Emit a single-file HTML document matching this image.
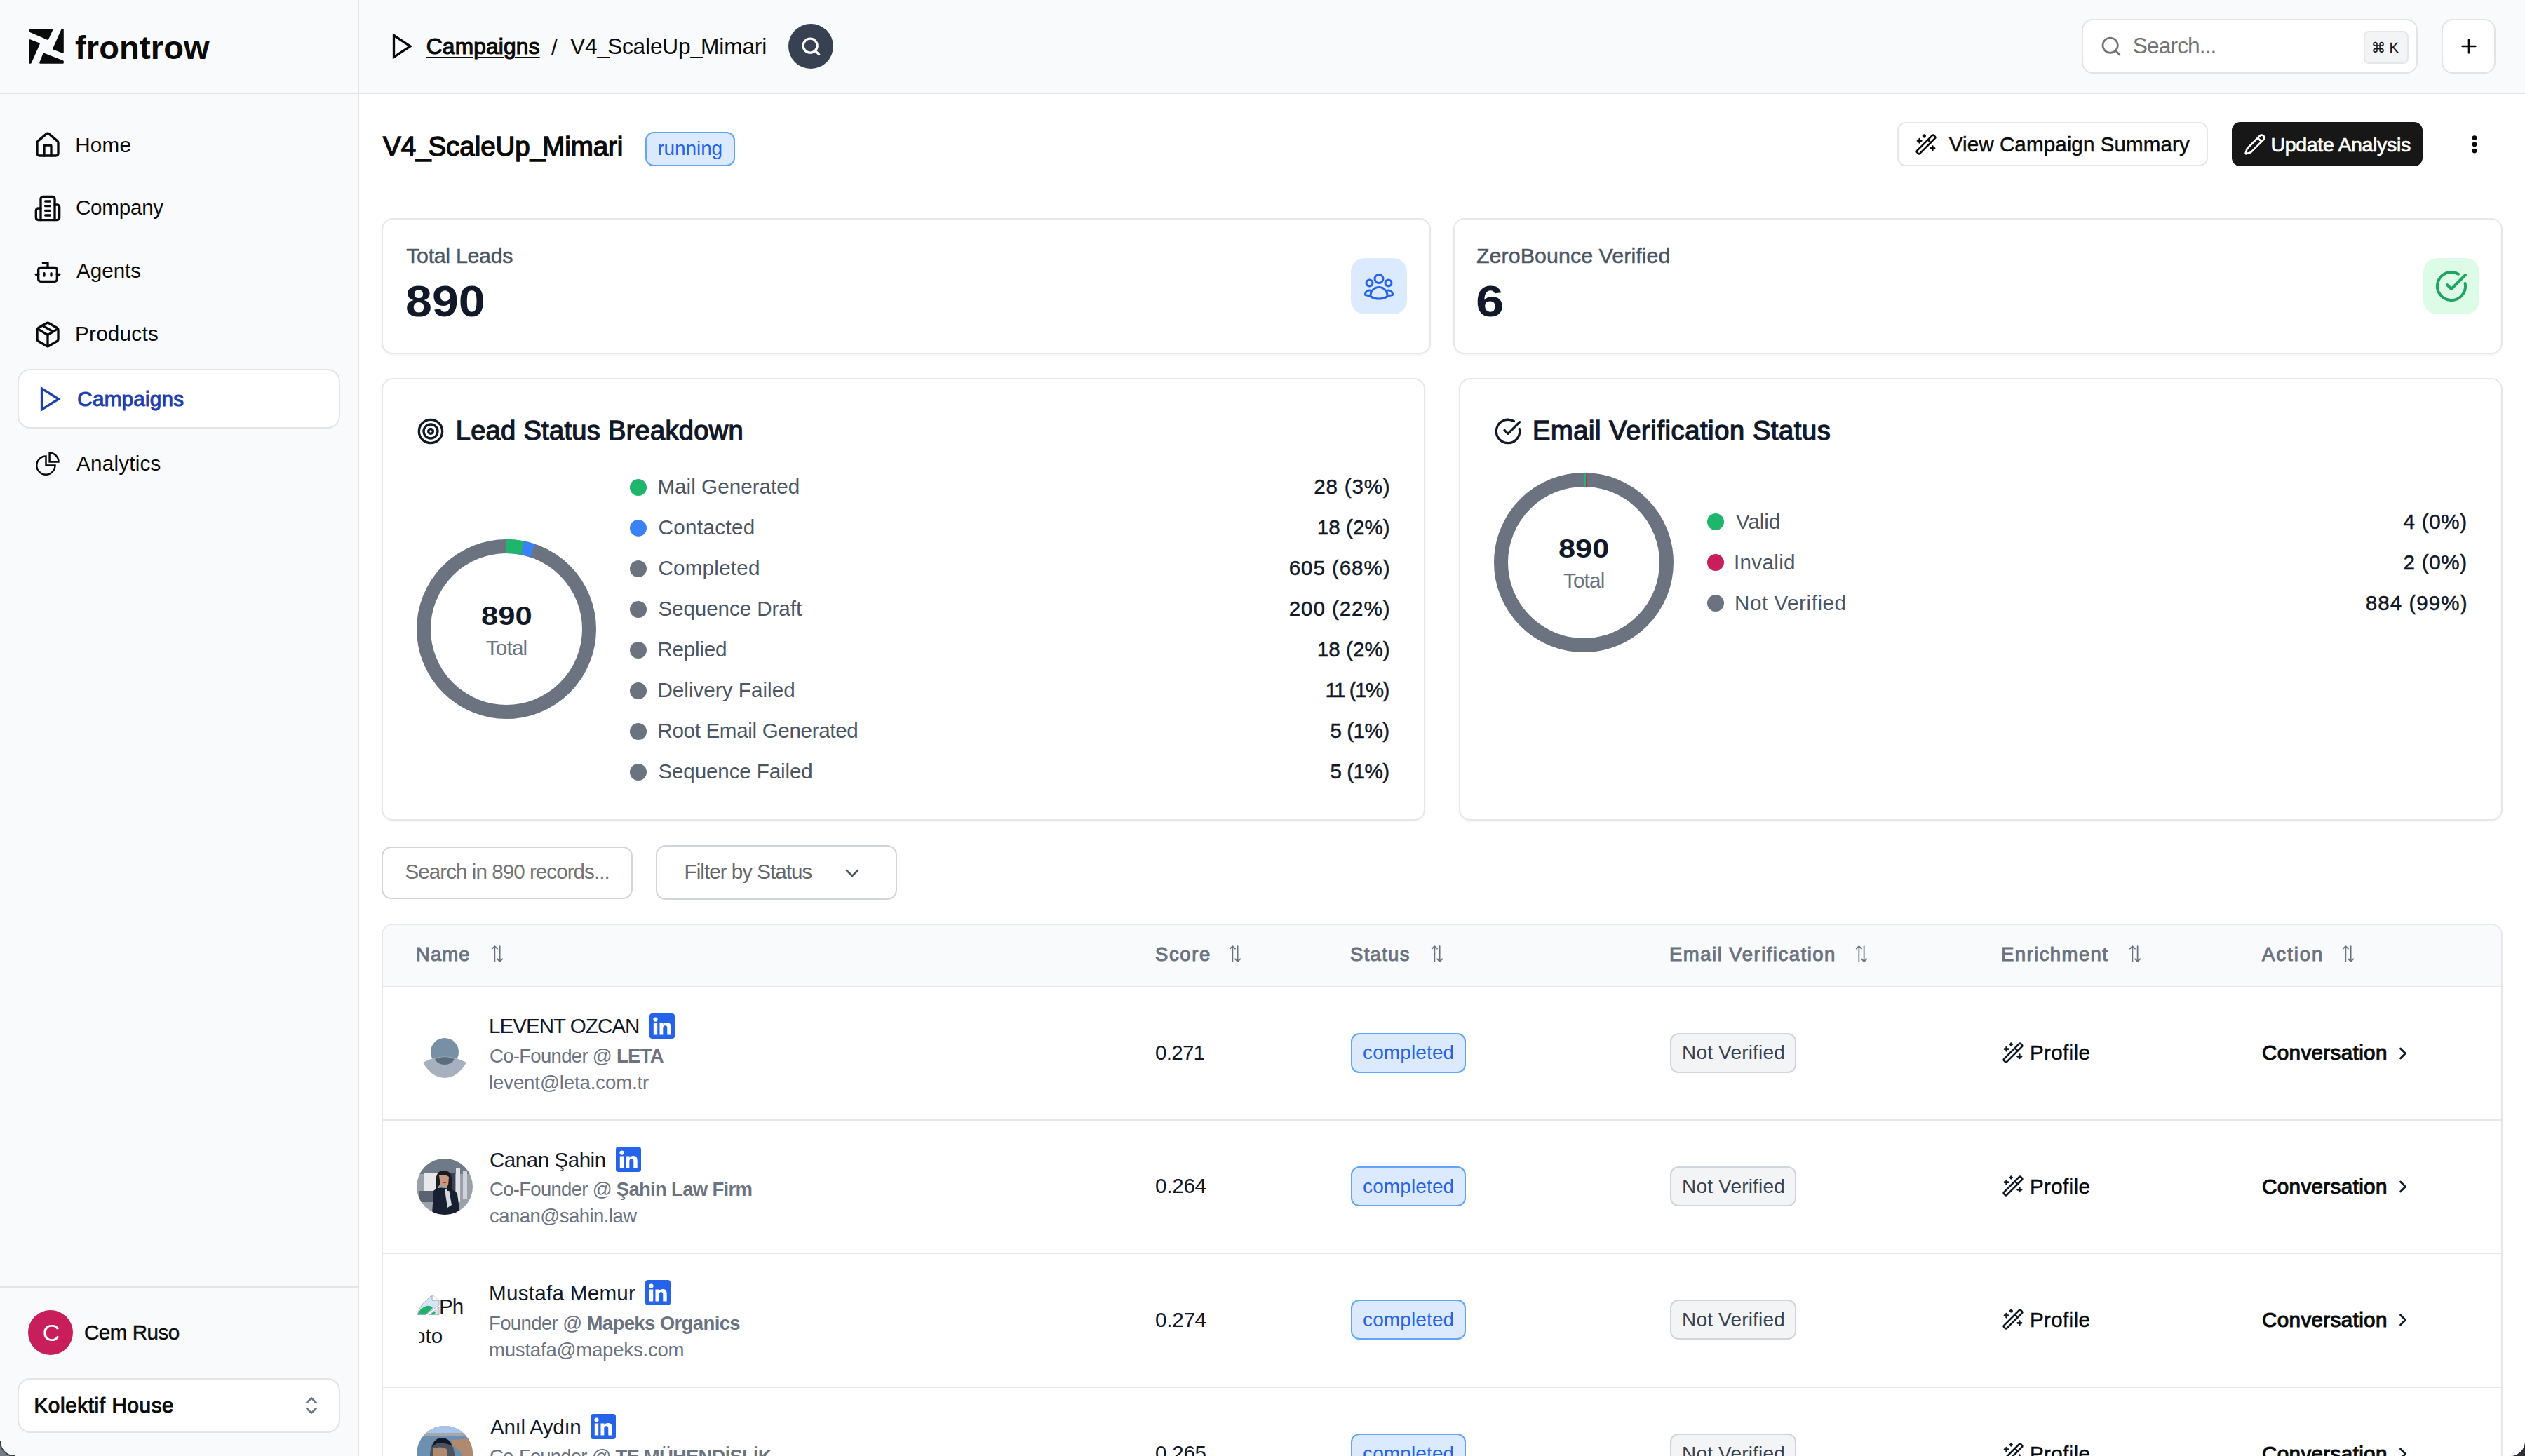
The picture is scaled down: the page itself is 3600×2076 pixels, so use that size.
<!DOCTYPE html>
<html><head><meta charset="utf-8"><title>Campaign</title>
<style>
*{box-sizing:border-box;margin:0;padding:0}
html,body{width:3600px;height:2076px;overflow:hidden;background:#fff}
body{font-family:"Liberation Sans",sans-serif;color:#111827;position:relative}
.abs{position:absolute}
svg{display:block}
.tx{position:absolute;white-space:nowrap;line-height:normal}
.card{position:absolute;background:#fff;border:2px solid #e5e7eb;border-radius:16px;box-shadow:0 2px 3px rgba(0,0,0,.04)}
.dot{position:absolute;width:24px;height:24px;border-radius:50%}
@media (max-width:2400px){html{zoom:0.5}}
</style></head><body>
<div class="abs" style="left:0;top:0;width:512px;height:2076px;background:#f9fafb;border-right:2px solid #e4e4e4"></div>
<div class="abs" style="left:512px;top:0;width:3088px;height:134px;background:#f9fafb;border-bottom:2px solid #e4e4e4"></div>
<div class="abs" style="left:0;top:132px;width:510px;height:2px;background:#e4e4e4"></div>
<svg class="abs" style="left:40px;top:40px" width="52" height="52" viewBox="0 0 52 52" fill="#0a0a0a" stroke="#0a0a0a" stroke-width="2.6" stroke-linejoin="round">
<path d="M2.5 2.5 L34 2.5 L28 15.5 L2.5 4.5 Z"/><path d="M49.5 2.5 L49.5 34.5 L36.5 29.5 L48.5 2.5 Z"/>
<path d="M49.5 49.5 L17.5 49.5 L22.5 37 L49.5 47.5 Z"/><path d="M2.5 49.5 L2.5 17.5 L15.5 22.5 L3.5 49.5 Z"/></svg>
<svg class="abs" style="left:48px;top:187px" width="40" height="40" viewBox="0 0 24 24" fill="none" stroke-linecap="round" stroke-linejoin="round" stroke="#0a0a0a" stroke-width="2" ><path d="M15 21v-8a1 1 0 0 0-1-1h-4a1 1 0 0 0-1 1v8"/><path d="M3 10a2 2 0 0 1 .709-1.528l7-5.999a2 2 0 0 1 2.582 0l7 5.999A2 2 0 0 1 21 10v9a2 2 0 0 1-2 2H5a2 2 0 0 1-2-2z"/></svg>
<svg class="abs" style="left:48px;top:277px" width="40" height="40" viewBox="0 0 24 24" fill="none" stroke-linecap="round" stroke-linejoin="round" stroke="#0a0a0a" stroke-width="2" ><path d="M6 22V4a2 2 0 0 1 2-2h8a2 2 0 0 1 2 2v18Z"/><path d="M6 12H4a2 2 0 0 0-2 2v6a2 2 0 0 0 2 2h2"/><path d="M18 9h2a2 2 0 0 1 2 2v9a2 2 0 0 1-2 2h-2"/><path d="M10 6h4"/><path d="M10 10h4"/><path d="M10 14h4"/><path d="M10 18h4"/></svg>
<svg class="abs" style="left:48px;top:368px" width="40" height="40" viewBox="0 0 24 24" fill="none" stroke-linecap="round" stroke-linejoin="round" stroke="#0a0a0a" stroke-width="2" ><path d="M12 8V4H8"/><rect width="16" height="12" x="4" y="8" rx="2"/><path d="M2 14h2"/><path d="M20 14h2"/><path d="M15 13v2"/><path d="M9 13v2"/></svg>
<svg class="abs" style="left:48px;top:457px" width="40" height="40" viewBox="0 0 24 24" fill="none" stroke-linecap="round" stroke-linejoin="round" stroke="#0a0a0a" stroke-width="2" ><path d="M11 21.73a2 2 0 0 0 2 0l7-4A2 2 0 0 0 21 16V8a2 2 0 0 0-1-1.73l-7-4a2 2 0 0 0-2 0l-7 4A2 2 0 0 0 3 8v8a2 2 0 0 0 1 1.73z"/><path d="M12 22V12"/><path d="m3.3 7 7.703 4.734a2 2 0 0 0 1.994 0L20.7 7"/><path d="m7.5 4.27 9 5.15"/></svg>
<div class="abs" style="left:25px;top:526px;width:460px;height:85px;background:#fff;border:2px solid #e4e4e4;border-radius:18px"></div>
<svg class="abs" style="left:56px;top:551px" width="32" height="36" viewBox="0 0 32 36" fill="none" stroke="#1e40af" stroke-width="3.3" stroke-linejoin="miter"><path d="M3.5 3 L27.5 18 L3.5 33 Z"/></svg>
<svg class="abs" style="left:45px;top:638px" width="50" height="46" viewBox="0 0 50 46" fill="none" stroke="#0a0a0a" stroke-width="2.5" stroke-linejoin="miter"><path d="M20.5 12.5 V25.6 H33.5 A13.1 13.1 0 1 1 20.5 12.5 Z"/><path d="M25.6 20.5 V7.7 A12.8 12.8 0 0 1 38.4 20.5 Z"/></svg>
<div class="abs" style="left:0;top:1834px;width:510px;height:2px;background:#e4e4e4"></div>
<div class="abs" style="left:40px;top:1868px;width:64px;height:64px;border-radius:50%;background:#c81e5a"></div>
<div class="abs" style="left:25px;top:1965px;width:460px;height:78px;background:#fff;border:2px solid #e4e4e4;border-radius:18px"></div>
<svg class="abs" style="left:428px;top:1988px" width="32" height="32" viewBox="0 0 24 24" fill="none" stroke="#6b7280" stroke-width="2" stroke-linecap="round" stroke-linejoin="round"><path d="m7 15 5 5 5-5"/><path d="m7 9 5-5 5 5"/></svg>
<svg class="abs" style="left:558px;top:47px" width="32" height="38" viewBox="0 0 32 38" fill="none" stroke="#0a0a0a" stroke-width="3.3" stroke-linejoin="miter"><path d="M3.5 3.5 L27 19 L3.5 34.5 Z"/></svg>
<div class="abs" style="left:1124px;top:34px;width:64px;height:64px;border-radius:50%;background:#374151"></div>
<svg class="abs" style="left:1136px;top:46px" width="40" height="40" viewBox="0 0 24 24" fill="none" stroke="#fff" stroke-width="2" stroke-linecap="round" stroke-linejoin="round"><circle cx="11.5" cy="11.5" r="6"/><path d="m19 19-3.2-3.2"/></svg>
<div class="abs" style="left:2968px;top:27px;width:479px;height:78px;background:#fff;border:2px solid #e4e4e4;border-radius:16px"></div>
<svg class="abs" style="left:2994px;top:50px" width="32" height="32" viewBox="0 0 24 24" fill="none" stroke-linecap="round" stroke-linejoin="round" stroke="#737373" stroke-width="2" ><circle cx="11" cy="11" r="8"/><path d="m21 21-4.3-4.3"/></svg>
<div class="abs" style="left:3370px;top:44px;width:64px;height:47px;background:#f3f4f6;border:2px solid #e5e7eb;border-radius:8px"></div>
<div class="abs" style="left:3481px;top:27px;width:77px;height:78px;background:#fff;border:2px solid #e4e4e4;border-radius:16px"></div>
<svg class="abs" style="left:3504px;top:50px" width="32" height="32" viewBox="0 0 24 24" fill="none" stroke-linecap="round" stroke-linejoin="round" stroke="#0a0a0a" stroke-width="2" ><path d="M5 12h14"/><path d="M12 5v14"/></svg>
<div class="abs" style="left:920px;top:188px;width:128px;height:49px;background:#dbeafe;border:2px solid #60a5fa;border-radius:12px"></div>
<div class="abs" style="left:2705px;top:174px;width:443px;height:63px;background:#fff;border:2px solid #e5e7eb;border-radius:12px"></div>
<svg class="abs" style="left:2730px;top:190px" width="32" height="32" viewBox="0 0 24 24" fill="none" stroke-linecap="round" stroke-linejoin="round" stroke="#0a0a0a" stroke-width="2" ><path d="m21.64 3.64-1.28-1.28a1.21 1.21 0 0 0-1.72 0L2.36 18.64a1.21 1.21 0 0 0 0 1.72l1.28 1.28a1.2 1.2 0 0 0 1.72 0L21.64 5.36a1.2 1.2 0 0 0 0-1.72"/><path d="m14 7 3 3"/><path d="M5 6v4"/><path d="M19 14v4"/><path d="M10 2v2"/><path d="M7 8H3"/><path d="M21 16h-4"/><path d="M11 3H9"/></svg>
<div class="abs" style="left:3182px;top:174px;width:272px;height:63px;background:#171717;border-radius:12px"></div>
<svg class="abs" style="left:3199px;top:190px" width="32" height="32" viewBox="0 0 24 24" fill="none" stroke-linecap="round" stroke-linejoin="round" stroke="#fff" stroke-width="2" ><path d="M21.174 6.812a1 1 0 0 0-3.986-3.987L3.842 16.174a2 2 0 0 0-.5.83l-1.321 4.352a.5.5 0 0 0 .623.622l4.353-1.32a2 2 0 0 0 .83-.497z"/><path d="m15 5 4 4"/></svg>
<svg class="abs" style="left:3508px;top:186px" width="40" height="40" viewBox="0 0 40 40" fill="#0a0a0a"><circle cx="20" cy="10.6" r="3.4"/><circle cx="20" cy="19.8" r="3.4"/><circle cx="20" cy="29.1" r="3.4"/></svg>
<div class="card" style="left:544px;top:311px;width:1496px;height:194px"></div>
<div class="card" style="left:2072px;top:311px;width:1496px;height:194px"></div>
<div class="abs" style="left:1926px;top:368px;width:80px;height:80px;background:#dbeafe;border-radius:20px"></div>
<svg class="abs" style="left:1942px;top:384px" width="48" height="48" viewBox="0 0 24 24" fill="none" stroke-linecap="round" stroke-linejoin="round" stroke="#2563eb" stroke-width="1.5" ><path d="M18 18.72a9.094 9.094 0 0 0 3.741-.479 3 3 0 0 0-4.682-2.72m.94 3.198.001.031c0 .225-.012.447-.037.666A11.944 11.944 0 0 1 12 21c-2.17 0-4.207-.576-5.963-1.584A6.062 6.062 0 0 1 6 18.719m12 0a5.971 5.971 0 0 0-.941-3.197m0 0A5.995 5.995 0 0 0 12 12.75a5.995 5.995 0 0 0-5.058 2.772m0 0a3 3 0 0 0-4.681 2.72 8.986 8.986 0 0 0 3.74.477m.94-3.197a5.971 5.971 0 0 0-.94 3.197M15 6.75a3 3 0 1 1-6 0 3 3 0 0 1 6 0Zm6 3a2.25 2.25 0 1 1-4.5 0 2.25 2.25 0 0 1 4.5 0Zm-13.5 0a2.25 2.25 0 1 1-4.5 0 2.25 2.25 0 0 1 4.5 0Z"/></svg>
<div class="abs" style="left:3455px;top:368px;width:80px;height:80px;background:#dcfce7;border-radius:20px"></div>
<svg class="abs" style="left:3471px;top:384px" width="48" height="48" viewBox="0 0 24 24" fill="none" stroke-linecap="round" stroke-linejoin="round" stroke="#1fa463" stroke-width="2" ><path d="M21.801 10A10 10 0 1 1 17 3.335"/><path d="m9 11 3 3L22 4"/></svg>
<div class="card" style="left:544px;top:539px;width:1488px;height:631px"></div>
<div class="card" style="left:2080px;top:539px;width:1488px;height:631px"></div>
<svg class="abs" style="left:594px;top:595px" width="40" height="40" viewBox="0 0 24 24" fill="none" stroke-linecap="round" stroke-linejoin="round" stroke="#111827" stroke-width="2" ><circle cx="12" cy="12" r="10"/><circle cx="12" cy="12" r="6"/><circle cx="12" cy="12" r="2"/></svg>
<svg class="abs" style="left:2130px;top:595px" width="40" height="40" viewBox="0 0 24 24" fill="none" stroke-linecap="round" stroke-linejoin="round" stroke="#111827" stroke-width="2" ><path d="M21.801 10A10 10 0 1 1 17 3.335"/><path d="m9 11 3 3L22 4"/></svg>
<svg class="abs" style="left:594px;top:769px" width="256" height="256" viewBox="0 0 256 256"><circle cx="128" cy="128" r="118" fill="none" stroke="#6b7280" stroke-width="20"/><circle cx="128" cy="128" r="118" fill="none" stroke="#1eb56d" stroke-width="20" stroke-dasharray="0 0.00 23.33 2000" transform="rotate(-90 128 128)"/><circle cx="128" cy="128" r="118" fill="none" stroke="#3b82f6" stroke-width="20" stroke-dasharray="0 23.33 14.99 2000" transform="rotate(-90 128 128)"/></svg>
<svg class="abs" style="left:2130px;top:674px" width="256" height="256" viewBox="0 0 256 256"><circle cx="128" cy="128" r="118" fill="none" stroke="#6b7280" stroke-width="20"/><circle cx="128" cy="128" r="118" fill="none" stroke="#1eb56d" stroke-width="20" stroke-dasharray="0 0.00 3.33 2000" transform="rotate(-90 128 128)"/><circle cx="128" cy="128" r="118" fill="none" stroke="#c81e5a" stroke-width="20" stroke-dasharray="0 3.33 1.67 2000" transform="rotate(-90 128 128)"/></svg>
<div class="dot" style="left:898px;top:683px;background:#1eb56d"></div>
<div class="dot" style="left:898px;top:741px;background:#3b82f6"></div>
<div class="dot" style="left:898px;top:799px;background:#6b7280"></div>
<div class="dot" style="left:898px;top:857px;background:#6b7280"></div>
<div class="dot" style="left:898px;top:915px;background:#6b7280"></div>
<div class="dot" style="left:898px;top:973px;background:#6b7280"></div>
<div class="dot" style="left:898px;top:1031px;background:#6b7280"></div>
<div class="dot" style="left:898px;top:1089px;background:#6b7280"></div>
<div class="dot" style="left:2434px;top:732px;background:#1eb56d"></div>
<div class="dot" style="left:2434px;top:790px;background:#c81e5a"></div>
<div class="dot" style="left:2434px;top:848px;background:#6b7280"></div>
<div class="abs" style="left:544px;top:1207px;width:358px;height:75px;background:#fff;border:2px solid #d1d5db;border-radius:14px"></div>
<div class="abs" style="left:935px;top:1205px;width:344px;height:78px;background:#fff;border:2px solid #d1d5db;border-radius:14px"></div>
<svg class="abs" style="left:1199px;top:1229px" width="32" height="32" viewBox="0 0 24 24" fill="none" stroke-linecap="round" stroke-linejoin="round" stroke="#4b5563" stroke-width="2" ><path d="m6 9 6 6 6-6"/></svg>
<div class="abs" style="left:544px;top:1317px;width:3024px;height:900px;background:#fff;border:2px solid #e5e7eb;border-radius:16px;overflow:hidden"><div style="height:89px;background:#f9fafb;border-bottom:2px solid #e5e7eb"></div></div>
<svg class="abs" style="left:700px;top:1347px" width="18" height="26" viewBox="0 0 17 25" fill="none" stroke="#6b7280" stroke-width="1.7" stroke-linecap="round" stroke-linejoin="round"><path d="M5 23V2M1.5 5.5 5 2l3.5 3.5"/><path d="M12 2v21M8.5 19.5 12 23l3.5-3.5"/></svg>
<svg class="abs" style="left:1752px;top:1347px" width="18" height="26" viewBox="0 0 17 25" fill="none" stroke="#6b7280" stroke-width="1.7" stroke-linecap="round" stroke-linejoin="round"><path d="M5 23V2M1.5 5.5 5 2l3.5 3.5"/><path d="M12 2v21M8.5 19.5 12 23l3.5-3.5"/></svg>
<svg class="abs" style="left:2040px;top:1347px" width="18" height="26" viewBox="0 0 17 25" fill="none" stroke="#6b7280" stroke-width="1.7" stroke-linecap="round" stroke-linejoin="round"><path d="M5 23V2M1.5 5.5 5 2l3.5 3.5"/><path d="M12 2v21M8.5 19.5 12 23l3.5-3.5"/></svg>
<svg class="abs" style="left:2645px;top:1347px" width="18" height="26" viewBox="0 0 17 25" fill="none" stroke="#6b7280" stroke-width="1.7" stroke-linecap="round" stroke-linejoin="round"><path d="M5 23V2M1.5 5.5 5 2l3.5 3.5"/><path d="M12 2v21M8.5 19.5 12 23l3.5-3.5"/></svg>
<svg class="abs" style="left:3035px;top:1347px" width="18" height="26" viewBox="0 0 17 25" fill="none" stroke="#6b7280" stroke-width="1.7" stroke-linecap="round" stroke-linejoin="round"><path d="M5 23V2M1.5 5.5 5 2l3.5 3.5"/><path d="M12 2v21M8.5 19.5 12 23l3.5-3.5"/></svg>
<svg class="abs" style="left:3339px;top:1347px" width="18" height="26" viewBox="0 0 17 25" fill="none" stroke="#6b7280" stroke-width="1.7" stroke-linecap="round" stroke-linejoin="round"><path d="M5 23V2M1.5 5.5 5 2l3.5 3.5"/><path d="M12 2v21M8.5 19.5 12 23l3.5-3.5"/></svg>
<div class="abs" style="left:546px;top:1596px;width:3020px;height:2px;background:#e5e7eb"></div>
<svg class="abs" style="left:926px;top:1445px" width="36" height="36" viewBox="0 0 36 36"><rect width="36" height="36" rx="4" fill="#2563eb"/><circle cx="8.5" cy="8.6" r="3.1" fill="#fff"/><rect x="5.8" y="13.5" width="5.4" height="17" fill="#fff"/><path d="M14.5 13.5h5.1v2.4c.8-1.5 2.6-2.8 5.2-2.8 5 0 5.9 3.2 5.9 7.5v9.9h-5.4v-8.7c0-2.1 0-4.6-2.8-4.6s-3.2 2.2-3.2 4.5v8.8h-4.8z" fill="#fff"/></svg>
<div class="abs" style="left:1926px;top:1473px;width:164px;height:57px;background:#dbeafe;border:2px solid #60a5fa;border-radius:12px"></div>
<div class="abs" style="left:2381px;top:1473px;width:180px;height:57px;background:#f3f4f6;border:2px solid #d1d5db;border-radius:12px"></div>
<svg class="abs" style="left:2854px;top:1485px" width="32" height="32" viewBox="0 0 24 24" fill="none" stroke-linecap="round" stroke-linejoin="round" stroke="#111827" stroke-width="2" ><path d="m21.64 3.64-1.28-1.28a1.21 1.21 0 0 0-1.72 0L2.36 18.64a1.21 1.21 0 0 0 0 1.72l1.28 1.28a1.2 1.2 0 0 0 1.72 0L21.64 5.36a1.2 1.2 0 0 0 0-1.72"/><path d="m14 7 3 3"/><path d="M5 6v4"/><path d="M19 14v4"/><path d="M10 2v2"/><path d="M7 8H3"/><path d="M21 16h-4"/><path d="M11 3H9"/></svg>
<svg class="abs" style="left:3412px;top:1488px" width="28" height="28" viewBox="0 0 24 24" fill="none" stroke-linecap="round" stroke-linejoin="round" stroke="#111827" stroke-width="2.4" ><path d="m9 18 6-6-6-6"/></svg>
<div class="abs" style="left:546px;top:1786px;width:3020px;height:2px;background:#e5e7eb"></div>
<svg class="abs" style="left:878px;top:1635px" width="36" height="36" viewBox="0 0 36 36"><rect width="36" height="36" rx="4" fill="#2563eb"/><circle cx="8.5" cy="8.6" r="3.1" fill="#fff"/><rect x="5.8" y="13.5" width="5.4" height="17" fill="#fff"/><path d="M14.5 13.5h5.1v2.4c.8-1.5 2.6-2.8 5.2-2.8 5 0 5.9 3.2 5.9 7.5v9.9h-5.4v-8.7c0-2.1 0-4.6-2.8-4.6s-3.2 2.2-3.2 4.5v8.8h-4.8z" fill="#fff"/></svg>
<div class="abs" style="left:1926px;top:1663px;width:164px;height:57px;background:#dbeafe;border:2px solid #60a5fa;border-radius:12px"></div>
<div class="abs" style="left:2381px;top:1663px;width:180px;height:57px;background:#f3f4f6;border:2px solid #d1d5db;border-radius:12px"></div>
<svg class="abs" style="left:2854px;top:1675px" width="32" height="32" viewBox="0 0 24 24" fill="none" stroke-linecap="round" stroke-linejoin="round" stroke="#111827" stroke-width="2" ><path d="m21.64 3.64-1.28-1.28a1.21 1.21 0 0 0-1.72 0L2.36 18.64a1.21 1.21 0 0 0 0 1.72l1.28 1.28a1.2 1.2 0 0 0 1.72 0L21.64 5.36a1.2 1.2 0 0 0 0-1.72"/><path d="m14 7 3 3"/><path d="M5 6v4"/><path d="M19 14v4"/><path d="M10 2v2"/><path d="M7 8H3"/><path d="M21 16h-4"/><path d="M11 3H9"/></svg>
<svg class="abs" style="left:3412px;top:1678px" width="28" height="28" viewBox="0 0 24 24" fill="none" stroke-linecap="round" stroke-linejoin="round" stroke="#111827" stroke-width="2.4" ><path d="m9 18 6-6-6-6"/></svg>
<div class="abs" style="left:546px;top:1977px;width:3020px;height:2px;background:#e5e7eb"></div>
<svg class="abs" style="left:920px;top:1825px" width="36" height="36" viewBox="0 0 36 36"><rect width="36" height="36" rx="4" fill="#2563eb"/><circle cx="8.5" cy="8.6" r="3.1" fill="#fff"/><rect x="5.8" y="13.5" width="5.4" height="17" fill="#fff"/><path d="M14.5 13.5h5.1v2.4c.8-1.5 2.6-2.8 5.2-2.8 5 0 5.9 3.2 5.9 7.5v9.9h-5.4v-8.7c0-2.1 0-4.6-2.8-4.6s-3.2 2.2-3.2 4.5v8.8h-4.8z" fill="#fff"/></svg>
<div class="abs" style="left:1926px;top:1853px;width:164px;height:57px;background:#dbeafe;border:2px solid #60a5fa;border-radius:12px"></div>
<div class="abs" style="left:2381px;top:1853px;width:180px;height:57px;background:#f3f4f6;border:2px solid #d1d5db;border-radius:12px"></div>
<svg class="abs" style="left:2854px;top:1865px" width="32" height="32" viewBox="0 0 24 24" fill="none" stroke-linecap="round" stroke-linejoin="round" stroke="#111827" stroke-width="2" ><path d="m21.64 3.64-1.28-1.28a1.21 1.21 0 0 0-1.72 0L2.36 18.64a1.21 1.21 0 0 0 0 1.72l1.28 1.28a1.2 1.2 0 0 0 1.72 0L21.64 5.36a1.2 1.2 0 0 0 0-1.72"/><path d="m14 7 3 3"/><path d="M5 6v4"/><path d="M19 14v4"/><path d="M10 2v2"/><path d="M7 8H3"/><path d="M21 16h-4"/><path d="M11 3H9"/></svg>
<svg class="abs" style="left:3412px;top:1868px" width="28" height="28" viewBox="0 0 24 24" fill="none" stroke-linecap="round" stroke-linejoin="round" stroke="#111827" stroke-width="2.4" ><path d="m9 18 6-6-6-6"/></svg>
<svg class="abs" style="left:842px;top:2016px" width="36" height="36" viewBox="0 0 36 36"><rect width="36" height="36" rx="4" fill="#2563eb"/><circle cx="8.5" cy="8.6" r="3.1" fill="#fff"/><rect x="5.8" y="13.5" width="5.4" height="17" fill="#fff"/><path d="M14.5 13.5h5.1v2.4c.8-1.5 2.6-2.8 5.2-2.8 5 0 5.9 3.2 5.9 7.5v9.9h-5.4v-8.7c0-2.1 0-4.6-2.8-4.6s-3.2 2.2-3.2 4.5v8.8h-4.8z" fill="#fff"/></svg>
<div class="abs" style="left:1926px;top:2044px;width:164px;height:57px;background:#dbeafe;border:2px solid #60a5fa;border-radius:12px"></div>
<div class="abs" style="left:2381px;top:2044px;width:180px;height:57px;background:#f3f4f6;border:2px solid #d1d5db;border-radius:12px"></div>
<svg class="abs" style="left:2854px;top:2056px" width="32" height="32" viewBox="0 0 24 24" fill="none" stroke-linecap="round" stroke-linejoin="round" stroke="#111827" stroke-width="2" ><path d="m21.64 3.64-1.28-1.28a1.21 1.21 0 0 0-1.72 0L2.36 18.64a1.21 1.21 0 0 0 0 1.72l1.28 1.28a1.2 1.2 0 0 0 1.72 0L21.64 5.36a1.2 1.2 0 0 0 0-1.72"/><path d="m14 7 3 3"/><path d="M5 6v4"/><path d="M19 14v4"/><path d="M10 2v2"/><path d="M7 8H3"/><path d="M21 16h-4"/><path d="M11 3H9"/></svg>
<svg class="abs" style="left:3412px;top:2059px" width="28" height="28" viewBox="0 0 24 24" fill="none" stroke-linecap="round" stroke-linejoin="round" stroke="#111827" stroke-width="2.4" ><path d="m9 18 6-6-6-6"/></svg>
<svg class="abs" style="left:594px;top:1462px" width="80" height="80" viewBox="0 0 80 80"><circle cx="40" cy="38" r="20" fill="#7790a6"/><path d="M9 53 Q40 36 71 53 Q58 75 40 75 Q22 75 9 53Z" fill="#a7b0be"/><path d="M26 48 Q40 42 54 48 Q50 56 40 56 Q30 56 26 48Z" fill="#5d6d80"/></svg>
<svg class="abs" style="left:594px;top:1652px" width="80" height="80" viewBox="0 0 80 80"><defs><clipPath id="cpa"><circle cx="40" cy="40" r="40"/></clipPath></defs><g clip-path="url(#cpa)">
<rect width="80" height="80" fill="#9aa1ab"/>
<rect x="0" y="0" width="80" height="22" fill="#6f7a88"/>
<rect x="10" y="20" width="22" height="26" fill="#e6e8ec"/>
<rect x="4" y="46" width="20" height="16" fill="#5b6370"/>
<rect x="56" y="14" width="6" height="48" fill="#dfe2e6"/>
<rect x="66" y="18" width="6" height="40" fill="#cfd3d8"/>
<rect x="48" y="20" width="6" height="44" fill="#3d4350"/>
<path d="M22 80 L24 46 Q30 40 40 42 Q52 42 58 50 L62 80Z" fill="#172033"/>
<path d="M40 44 L46 44 L50 66 L44 70Z" fill="#d5d8de"/>
<path d="M28 26 Q30 16 40 17 Q50 18 50 30 L50 46 L44 46 L44 36 L32 38 L30 46 L27 44Z" fill="#1b1c22"/>
<path d="M32 24 Q40 21 46 26 L45 38 Q40 42 34 38Z" fill="#c39a7c"/>
<rect x="38" y="33" width="4" height="2" fill="#d21f5a"/>
</g></svg>
<svg class="abs" style="left:594px;top:1844px" width="34" height="32" viewBox="0 0 34 32">
<path d="M1 30.6 L4 22 Q8 14 14 10 L22 2 L32 10 L32 17 L13 30.6Z" fill="#d6e4fa" stroke="#a0a4aa" stroke-width="0.8"/>
<path d="M1.4 30.2 Q5 21 14 18 Q20 17 23 21 L13 30.2Z" fill="#22b06c"/>
<path d="M22 2 L22 10 L32 10" fill="#fafafa" stroke="#9aa0a6" stroke-width="1"/>
<path d="M18 30.6 L32 20 L32 30.6Z" fill="#d6e4fa" stroke="#a0a4aa" stroke-width="0.8"/>
<path d="M20 30.2 Q23 26 27 27 L25 30.2Z" fill="#22b06c"/>
</svg>
<div class="tx" style="left:626px;top:1846px;font-size:29.6px;letter-spacing:-1px;color:#111827">Ph</div>
<div class="abs" style="left:598px;top:1884px;width:60px;height:45px;overflow:hidden"><div class="tx" style="left:-8px;top:4px;font-size:29.6px;color:#111827">oto</div></div>
<svg class="abs" style="left:594px;top:2033px" width="80" height="80" viewBox="0 0 80 80"><defs><clipPath id="cpb"><circle cx="40" cy="40" r="40"/></clipPath></defs><g clip-path="url(#cpb)">
<rect width="80" height="80" fill="#6d90b0"/>
<rect x="0" y="0" width="80" height="11" fill="#a9c3ea"/>
<rect x="0" y="10" width="80" height="5" fill="#a3a8ae"/>
<path d="M50 20 L80 18 L80 80 L56 80 Q70 60 58 50 Q74 40 50 28Z" fill="#b08a6e"/>
<path d="M20 80 L19 40 Q20 20 36 19 Q52 20 54 40 L54 80Z" fill="#4b5260"/>
<path d="M22 30 Q24 18 36 17 Q48 18 50 28 Q40 24 30 24Z" fill="#121826"/>
<path d="M24 32 Q36 28 44 34 L44 44 L24 44Z" fill="#b08a70"/>
<path d="M16 44 L52 44 L50 56 L38 56 L36 50 L32 50 L30 56 L18 56Z" fill="#111"/>
</g></svg>
<svg class="abs" style="left:0;top:2055px" width="21" height="21" viewBox="0 0 21 21"><path d="M0 0 L0 21 L21 21 A21 21 0 0 1 0 0Z" fill="#767b85"/><path d="M0 0 A21 21 0 0 0 21 21" fill="none" stroke="#3a3f48" stroke-width="2"/></svg>
<svg class="abs" style="left:3579px;top:2055px" width="21" height="21" viewBox="0 0 21 21"><path d="M21 0 L21 21 L0 21 A21 21 0 0 0 21 0Z" fill="#2b2e33"/></svg>
<div class="tx" style="left:107.0px;top:39.8px;font-size:47px;font-weight:700;letter-spacing:0.143px;color:#0a0a0a;">frontrow</div>
<div class="tx" style="left:107.3px;top:189.9px;font-size:29.6px;font-weight:400;letter-spacing:0.2px;color:#0a0a0a;">Home</div>
<div class="tx" style="left:108.0px;top:279.4px;font-size:29.6px;font-weight:400;letter-spacing:-0.25px;color:#0a0a0a;">Company</div>
<div class="tx" style="left:109.0px;top:369.4px;font-size:29.6px;font-weight:400;letter-spacing:0.0px;color:#0a0a0a;">Agents</div>
<div class="tx" style="left:107.0px;top:459.1px;font-size:29.6px;font-weight:400;letter-spacing:0.271px;color:#0a0a0a;">Products</div>
<div class="tx" style="left:109.0px;top:643.8px;font-size:29.6px;font-weight:400;letter-spacing:0.25px;color:#0a0a0a;">Analytics</div>
<div class="tx" style="left:110.3px;top:551.5px;font-size:29.6px;font-weight:400;-webkit-text-stroke-width:1.07px;letter-spacing:0.25px;color:#1e40af;">Campaigns</div>
<div class="tx" style="left:120.0px;top:1883.0px;font-size:29.6px;font-weight:400;-webkit-text-stroke-width:0.47px;letter-spacing:-0.514px;color:#0a0a0a;">Cem Ruso</div>
<div class="tx" style="left:60.8px;top:1880.9px;font-size:34px;font-weight:400;letter-spacing:0px;color:#fff;">C</div>
<div class="tx" style="left:48.5px;top:1987.0px;font-size:29.6px;font-weight:400;-webkit-text-stroke-width:1.07px;letter-spacing:0.631px;color:#0a0a0a;">Kolektif House</div>
<div class="tx" style="left:607.8px;top:47.7px;font-size:31.7px;font-weight:400;-webkit-text-stroke-width:1.14px;letter-spacing:0.175px;color:#0a0a0a;text-decoration:underline;text-decoration-thickness:2px;text-underline-offset:4px">Campaigns</div>
<div class="tx" style="left:786.0px;top:48.8px;font-size:31.7px;font-weight:400;letter-spacing:0px;color:#0a0a0a;">/</div>
<div class="tx" style="left:813.0px;top:48.4px;font-size:31.7px;font-weight:400;letter-spacing:-0.188px;color:#0a0a0a;">V4<span style='letter-spacing:-3px'>_</span>ScaleUp<span style='letter-spacing:-3px'>_</span>Mimari</div>
<div class="tx" style="left:3040.8px;top:46.8px;font-size:31.7px;font-weight:400;letter-spacing:-0.9px;color:#737373;">Search...</div>
<div class="tx" style="left:3381.0px;top:56.4px;font-size:20px;font-weight:400;-webkit-text-stroke-width:0.32px;letter-spacing:0.0px;color:#171717;">&#8984; K</div>
<div class="tx" style="left:546.0px;top:187.2px;font-size:38.5px;font-weight:400;-webkit-text-stroke-width:1.39px;letter-spacing:-0.038px;color:#0a0a0a;">V4<span style='letter-spacing:-4px'>_</span>ScaleUp<span style='letter-spacing:-4px'>_</span>Mimari</div>
<div class="tx" style="left:937.4px;top:195.8px;font-size:28px;font-weight:400;letter-spacing:-0.1px;color:#2563eb;">running</div>
<div class="tx" style="left:2778.7px;top:188.8px;font-size:29.6px;font-weight:400;-webkit-text-stroke-width:0.47px;letter-spacing:0.08px;color:#0a0a0a;">View Campaign Summary</div>
<div class="tx" style="left:3237.6px;top:189.8px;font-size:28.5px;font-weight:400;-webkit-text-stroke-width:0.74px;letter-spacing:-0.343px;color:#fff;">Update Analysis</div>
<div class="tx" style="left:579.2px;top:347.0px;font-size:30.4px;font-weight:400;-webkit-text-stroke-width:0.49px;letter-spacing:-0.32px;color:#4b5563;">Total Leads</div>
<div class="tx" style="left:578.0px;top:392.7px;font-size:62.5px;font-weight:700;letter-spacing:0px;color:#111827;;transform:scaleX(1.0910);transform-origin:0 0">890</div>
<div class="tx" style="left:2105.0px;top:347.0px;font-size:30.4px;font-weight:400;-webkit-text-stroke-width:0.49px;letter-spacing:0.056px;color:#4b5563;">ZeroBounce Verified</div>
<div class="tx" style="left:2103.7px;top:392.7px;font-size:62.5px;font-weight:700;letter-spacing:0px;color:#111827;;transform:scaleX(1.1613);transform-origin:0 0">6</div>
<div class="tx" style="left:649.7px;top:593.4px;font-size:38px;font-weight:400;-webkit-text-stroke-width:1.37px;letter-spacing:0.325px;color:#111827;">Lead Status Breakdown</div>
<div class="tx" style="left:2185.0px;top:592.8px;font-size:38px;font-weight:400;-webkit-text-stroke-width:1.37px;letter-spacing:0.625px;color:#111827;">Email Verification Status</div>
<div class="tx" style="left:686.0px;top:856.5px;font-size:37.5px;font-weight:700;letter-spacing:0px;color:#111827;;transform:scaleX(1.1600);transform-origin:0 0">890</div>
<div class="tx" style="left:692.7px;top:906.8px;font-size:29.6px;font-weight:400;letter-spacing:-0.75px;color:#6b7280;">Total</div>
<div class="tx" style="left:2222.2px;top:760.8px;font-size:37.5px;font-weight:700;letter-spacing:0px;color:#111827;;transform:scaleX(1.1550);transform-origin:0 0">890</div>
<div class="tx" style="left:2229.0px;top:811.0px;font-size:29.6px;font-weight:400;letter-spacing:-0.825px;color:#6b7280;">Total</div>
<div class="tx" style="left:937.4px;top:677.4px;font-size:29.6px;font-weight:400;letter-spacing:0.046px;color:#4b5563;">Mail Generated</div>
<div class="tx" style="left:1873.2px;top:677.4px;font-size:29.6px;font-weight:400;-webkit-text-stroke-width:0.47px;letter-spacing:0.8px;color:#111827;">28 (3%)</div>
<div class="tx" style="left:938.4px;top:735.4px;font-size:29.6px;font-weight:400;letter-spacing:0.375px;color:#4b5563;">Contacted</div>
<div class="tx" style="left:1877.8px;top:735.4px;font-size:29.6px;font-weight:400;-webkit-text-stroke-width:0.47px;letter-spacing:0.033px;color:#111827;">18 (2%)</div>
<div class="tx" style="left:938.4px;top:793.4px;font-size:29.6px;font-weight:400;letter-spacing:0.25px;color:#4b5563;">Completed</div>
<div class="tx" style="left:1837.7px;top:793.4px;font-size:29.6px;font-weight:400;-webkit-text-stroke-width:0.47px;letter-spacing:0.912px;color:#111827;">605 (68%)</div>
<div class="tx" style="left:938.4px;top:851.4px;font-size:29.6px;font-weight:400;letter-spacing:-0.069px;color:#4b5563;">Sequence Draft</div>
<div class="tx" style="left:1837.7px;top:851.4px;font-size:29.6px;font-weight:400;-webkit-text-stroke-width:0.47px;letter-spacing:0.912px;color:#111827;">200 (22%)</div>
<div class="tx" style="left:937.4px;top:909.4px;font-size:29.6px;font-weight:400;letter-spacing:-0.2px;color:#4b5563;">Replied</div>
<div class="tx" style="left:1877.8px;top:909.4px;font-size:29.6px;font-weight:400;-webkit-text-stroke-width:0.47px;letter-spacing:0.033px;color:#111827;">18 (2%)</div>
<div class="tx" style="left:937.4px;top:967.4px;font-size:29.6px;font-weight:400;letter-spacing:0.036px;color:#4b5563;">Delivery Failed</div>
<div class="tx" style="left:1889.4px;top:967.4px;font-size:29.6px;font-weight:400;-webkit-text-stroke-width:0.47px;letter-spacing:-1.567px;color:#111827;">11 (1%)</div>
<div class="tx" style="left:937.4px;top:1025.4px;font-size:29.6px;font-weight:400;letter-spacing:-0.337px;color:#4b5563;">Root Email Generated</div>
<div class="tx" style="left:1896.5px;top:1025.4px;font-size:29.6px;font-weight:400;-webkit-text-stroke-width:0.47px;letter-spacing:-0.5px;color:#111827;">5 (1%)</div>
<div class="tx" style="left:938.4px;top:1083.4px;font-size:29.6px;font-weight:400;letter-spacing:-0.129px;color:#4b5563;">Sequence Failed</div>
<div class="tx" style="left:1896.5px;top:1083.4px;font-size:29.6px;font-weight:400;-webkit-text-stroke-width:0.47px;letter-spacing:-0.5px;color:#111827;">5 (1%)</div>
<div class="tx" style="left:2475.0px;top:726.9px;font-size:29.6px;font-weight:400;letter-spacing:-0.1px;color:#4b5563;">Valid</div>
<div class="tx" style="left:3426.6px;top:726.9px;font-size:29.6px;font-weight:400;-webkit-text-stroke-width:0.47px;letter-spacing:0.68px;color:#111827;">4 (0%)</div>
<div class="tx" style="left:2472.0px;top:784.9px;font-size:29.6px;font-weight:400;letter-spacing:0.333px;color:#4b5563;">Invalid</div>
<div class="tx" style="left:3426.6px;top:784.9px;font-size:29.6px;font-weight:400;-webkit-text-stroke-width:0.47px;letter-spacing:0.68px;color:#111827;">2 (0%)</div>
<div class="tx" style="left:2473.0px;top:842.9px;font-size:29.6px;font-weight:400;letter-spacing:0.545px;color:#4b5563;">Not Verified</div>
<div class="tx" style="left:3372.8px;top:842.9px;font-size:29.6px;font-weight:400;-webkit-text-stroke-width:0.47px;letter-spacing:1.025px;color:#111827;">884 (99%)</div>
<div class="tx" style="left:577.5px;top:1226.0px;font-size:29.6px;font-weight:400;letter-spacing:-0.957px;color:#737373;">Search in 890 records...</div>
<div class="tx" style="left:975.6px;top:1226.0px;font-size:29.6px;font-weight:400;letter-spacing:-0.973px;color:#666666;">Filter by Status</div>
<div class="tx" style="left:593.0px;top:1344.7px;font-size:27.5px;font-weight:400;-webkit-text-stroke-width:0.99px;letter-spacing:1.067px;color:#6b7280;">Name</div>
<div class="tx" style="left:1647.0px;top:1344.7px;font-size:27.5px;font-weight:400;-webkit-text-stroke-width:0.99px;letter-spacing:1.6px;color:#6b7280;">Score</div>
<div class="tx" style="left:1925.0px;top:1344.7px;font-size:27.5px;font-weight:400;-webkit-text-stroke-width:0.99px;letter-spacing:1.3px;color:#6b7280;">Status</div>
<div class="tx" style="left:2380.0px;top:1344.7px;font-size:27.5px;font-weight:400;-webkit-text-stroke-width:0.99px;letter-spacing:1.494px;color:#6b7280;">Email Verification</div>
<div class="tx" style="left:2853.0px;top:1344.7px;font-size:27.5px;font-weight:400;-webkit-text-stroke-width:0.99px;letter-spacing:1.433px;color:#6b7280;">Enrichment</div>
<div class="tx" style="left:3225.0px;top:1344.7px;font-size:27.5px;font-weight:400;-webkit-text-stroke-width:0.99px;letter-spacing:1.98px;color:#6b7280;">Action</div>
<div class="tx" style="left:697.0px;top:1446.1px;font-size:29.6px;font-weight:400;letter-spacing:-1.0px;color:#111827;">LEVENT OZCAN</div>
<div class="tx" style="left:698.0px;top:1489.5px;font-size:27.5px;font-weight:400;letter-spacing:-0.688px;color:#6b7280;">Co-Founder @ <b>LETA</b></div>
<div class="tx" style="left:697.0px;top:1527.7px;font-size:27.5px;font-weight:400;letter-spacing:-0.082px;color:#6b7280;">levent@leta.com.tr</div>
<div class="tx" style="left:1647.0px;top:1483.8px;font-size:29.6px;font-weight:400;letter-spacing:-0.75px;color:#111827;">0.271</div>
<div class="tx" style="left:1943.0px;top:1485.2px;font-size:28px;font-weight:400;letter-spacing:0.125px;color:#2563eb;">completed</div>
<div class="tx" style="left:2398.0px;top:1485.2px;font-size:28px;font-weight:400;letter-spacing:0.182px;color:#374151;">Not Verified</div>
<div class="tx" style="left:2894.0px;top:1484.1px;font-size:29.6px;font-weight:400;-webkit-text-stroke-width:0.47px;letter-spacing:0.333px;color:#0a0a0a;">Profile</div>
<div class="tx" style="left:3225.0px;top:1484.1px;font-size:29.6px;font-weight:400;-webkit-text-stroke-width:1.07px;letter-spacing:0.364px;color:#0a0a0a;">Conversation</div>
<div class="tx" style="left:698.0px;top:1636.6px;font-size:29.6px;font-weight:400;letter-spacing:-0.5px;color:#111827;">Canan Şahin</div>
<div class="tx" style="left:698.0px;top:1680.0px;font-size:27.5px;font-weight:400;letter-spacing:-0.704px;color:#6b7280;">Co-Founder @ <b>Şahin Law Firm</b></div>
<div class="tx" style="left:698.0px;top:1718.2px;font-size:27.5px;font-weight:400;letter-spacing:-0.521px;color:#6b7280;">canan@sahin.law</div>
<div class="tx" style="left:1647.0px;top:1674.3px;font-size:29.6px;font-weight:400;letter-spacing:-0.25px;color:#111827;">0.264</div>
<div class="tx" style="left:1943.0px;top:1675.7px;font-size:28px;font-weight:400;letter-spacing:0.125px;color:#2563eb;">completed</div>
<div class="tx" style="left:2398.0px;top:1675.7px;font-size:28px;font-weight:400;letter-spacing:0.182px;color:#374151;">Not Verified</div>
<div class="tx" style="left:2894.0px;top:1674.6px;font-size:29.6px;font-weight:400;-webkit-text-stroke-width:0.47px;letter-spacing:0.333px;color:#0a0a0a;">Profile</div>
<div class="tx" style="left:3225.0px;top:1674.6px;font-size:29.6px;font-weight:400;-webkit-text-stroke-width:1.07px;letter-spacing:0.364px;color:#0a0a0a;">Conversation</div>
<div class="tx" style="left:697.0px;top:1827.1px;font-size:29.6px;font-weight:400;letter-spacing:0.283px;color:#111827;">Mustafa Memur</div>
<div class="tx" style="left:697.0px;top:1870.5px;font-size:27.5px;font-weight:400;letter-spacing:-0.613px;color:#6b7280;">Founder @ <b>Mapeks Organics</b></div>
<div class="tx" style="left:697.0px;top:1908.7px;font-size:27.5px;font-weight:400;letter-spacing:-0.182px;color:#6b7280;">mustafa@mapeks.com</div>
<div class="tx" style="left:1647.0px;top:1864.8px;font-size:29.6px;font-weight:400;letter-spacing:-0.25px;color:#111827;">0.274</div>
<div class="tx" style="left:1943.0px;top:1866.2px;font-size:28px;font-weight:400;letter-spacing:0.125px;color:#2563eb;">completed</div>
<div class="tx" style="left:2398.0px;top:1866.2px;font-size:28px;font-weight:400;letter-spacing:0.182px;color:#374151;">Not Verified</div>
<div class="tx" style="left:2894.0px;top:1865.1px;font-size:29.6px;font-weight:400;-webkit-text-stroke-width:0.47px;letter-spacing:0.333px;color:#0a0a0a;">Profile</div>
<div class="tx" style="left:3225.0px;top:1865.1px;font-size:29.6px;font-weight:400;-webkit-text-stroke-width:1.07px;letter-spacing:0.364px;color:#0a0a0a;">Conversation</div>
<div class="tx" style="left:699.0px;top:2017.6px;font-size:29.6px;font-weight:400;letter-spacing:-0.333px;color:#111827;">Anıl Aydın</div>
<div class="tx" style="left:698.0px;top:2061.0px;font-size:27.5px;font-weight:400;letter-spacing:-0.808px;color:#6b7280;">Co-Founder @ <b>TE MÜHENDİSLİK</b></div>
<div class="tx" style="left:698.0px;top:2099.2px;font-size:27.5px;font-weight:400;letter-spacing:0.714px;color:#6b7280;">anil@temuhendislik.com</div>
<div class="tx" style="left:1647.0px;top:2055.3px;font-size:29.6px;font-weight:400;letter-spacing:-0.25px;color:#111827;">0.265</div>
<div class="tx" style="left:1943.0px;top:2056.7px;font-size:28px;font-weight:400;letter-spacing:0.125px;color:#2563eb;">completed</div>
<div class="tx" style="left:2398.0px;top:2056.7px;font-size:28px;font-weight:400;letter-spacing:0.182px;color:#374151;">Not Verified</div>
<div class="tx" style="left:2894.0px;top:2055.6px;font-size:29.6px;font-weight:400;-webkit-text-stroke-width:0.47px;letter-spacing:0.333px;color:#0a0a0a;">Profile</div>
<div class="tx" style="left:3225.0px;top:2055.6px;font-size:29.6px;font-weight:400;-webkit-text-stroke-width:1.07px;letter-spacing:0.364px;color:#0a0a0a;">Conversation</div>
</body></html>
